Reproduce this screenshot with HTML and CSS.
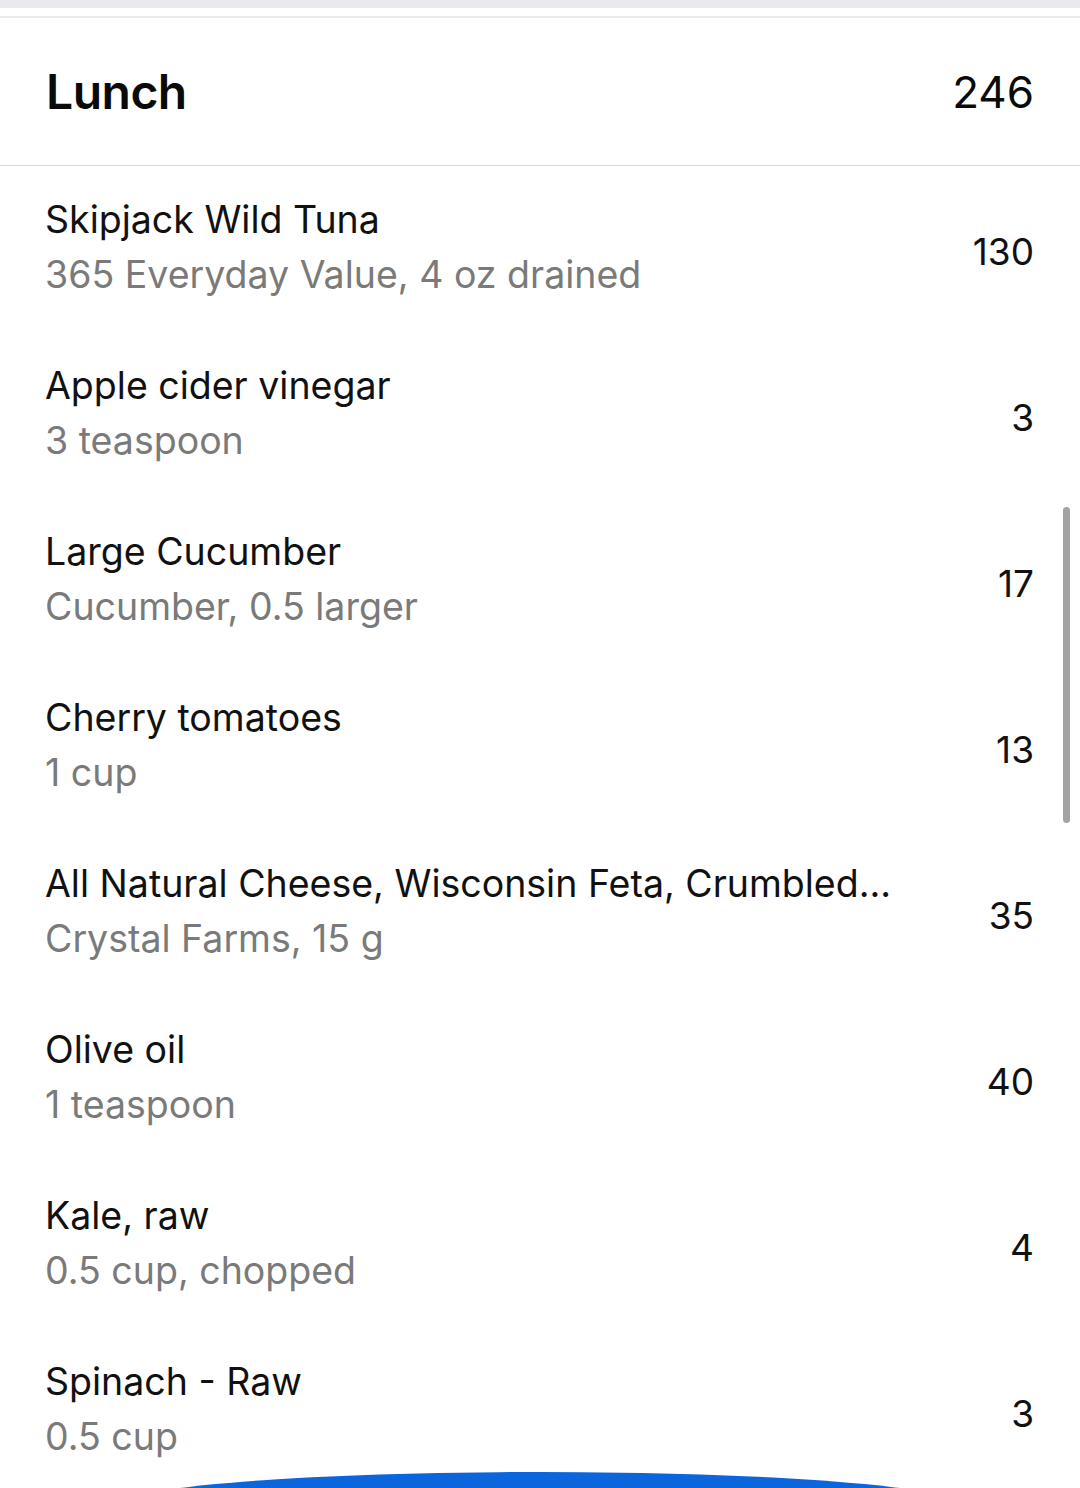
FILE: index.html
```html
<!DOCTYPE html>
<html>
<head>
<meta charset="utf-8">
<link rel="stylesheet" href="styles.css">
</head>
<body>
<div class="page">
  <div class="topband"></div>
  <div class="gap"></div>
  <div class="header">
    <div class="title">Lunch</div>
    <div class="total">246</div>
  </div>
  <div class="list">
    <div class="row"><div class="info"><div class="name">Skipjack Wild Tuna</div><div class="sub">365 Everyday Value, 4 oz drained</div></div><div class="cal">130</div></div>
    <div class="row"><div class="info"><div class="name">Apple cider vinegar</div><div class="sub">3 teaspoon</div></div><div class="cal">3</div></div>
    <div class="row"><div class="info"><div class="name">Large Cucumber</div><div class="sub">Cucumber, 0.5 larger</div></div><div class="cal">17</div></div>
    <div class="row"><div class="info"><div class="name">Cherry tomatoes</div><div class="sub">1 cup</div></div><div class="cal">13</div></div>
    <div class="row"><div class="info"><div class="name">All Natural Cheese, Wisconsin Feta, Crumbled...</div><div class="sub">Crystal Farms, 15 g</div></div><div class="cal">35</div></div>
    <div class="row"><div class="info"><div class="name">Olive oil</div><div class="sub">1 teaspoon</div></div><div class="cal">40</div></div>
    <div class="row"><div class="info"><div class="name">Kale, raw</div><div class="sub">0.5 cup, chopped</div></div><div class="cal">4</div></div>
    <div class="row"><div class="info"><div class="name">Spinach - Raw</div><div class="sub">0.5 cup</div></div><div class="cal">3</div></div>
  </div>
  <div class="scrollbar"></div>
  <div class="fab"></div>
</div>
</body>
</html>
```
FILE: styles.css
```css
html, body {
  margin: 0;
  padding: 0;
  background: #ffffff;
}
body {
  width: 1080px;
  height: 1488px;
  overflow: hidden;
  font-family: Inter, "Liberation Sans", sans-serif;
  color: #111111;
}
.page {
  position: relative;
  width: 1080px;
  height: 1488px;
  overflow: hidden;
}
.topband {
  height: 8px;
  background: #e9e9ee;
}
.gap {
  height: 8px;
  background: #ffffff;
  border-bottom: 2px solid #ebebeb;
}
.header {
  height: 148px;
  box-sizing: border-box;
  border-bottom: 1px solid #d8d8d8;
  display: flex;
  align-items: center;
  justify-content: space-between;
  padding: 0 46px 0 46px;
}
.title {
  font-size: 48px;
  font-weight: 600;
  letter-spacing: -0.5px;
  color: #0a0a0a;
}
.total {
  font-size: 44px;
  font-weight: 400;
  color: #0a0a0a;
}
.row {
  height: 166px;
  display: flex;
  align-items: center;
  justify-content: space-between;
  padding: 0 46px 0 45px;
}
.info {
  display: flex;
  flex-direction: column;
  margin-top: -4px;
}
.name {
  font-size: 37.5px;
  line-height: 55px;
  color: #111111;
}
.sub {
  font-size: 37.5px;
  line-height: 55px;
  color: #7a7a7a;
}
.cal {
  font-size: 37px;
  color: #111111;
  padding-top: 4px;
}
.scrollbar {
  position: absolute;
  left: 1063px;
  top: 507px;
  width: 7px;
  height: 316px;
  border-radius: 4px;
  background: #a3a3a3;
}
.fab {
  position: absolute;
  left: 120px;
  top: 1472px;
  width: 840px;
  height: 66px;
  border-radius: 50%;
  background: #0b65dd;
}
```
